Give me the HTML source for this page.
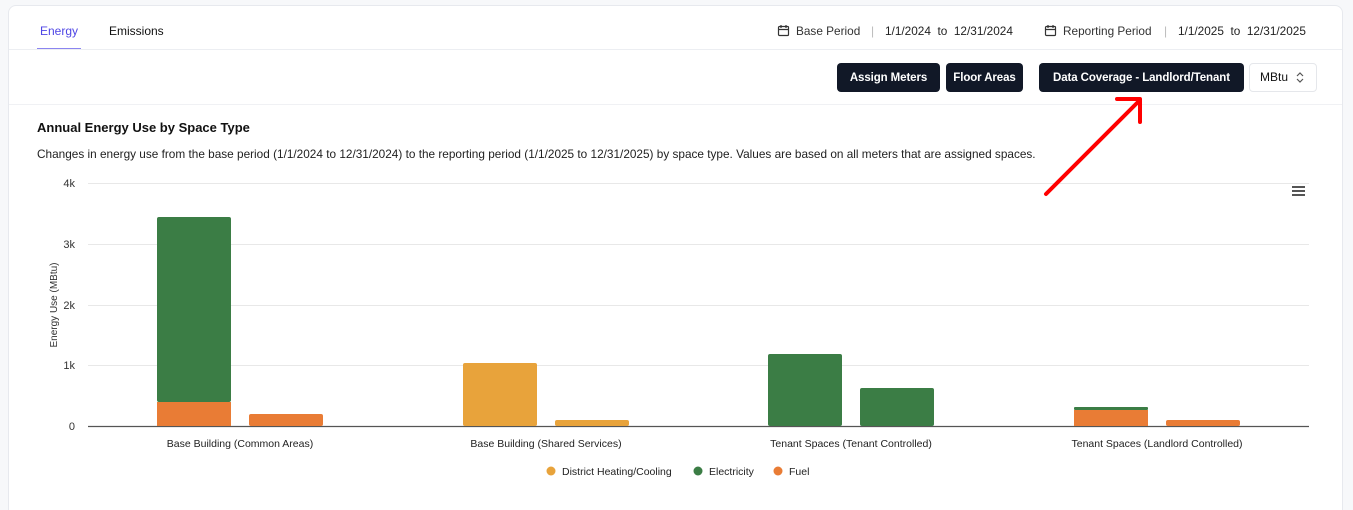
<!DOCTYPE html>
<html style="overflow:hidden;height:510px"><head><meta charset="utf-8"><style>
*{margin:0;padding:0;box-sizing:border-box}
body{width:1353px;height:510px;background:#f7f8fa;font-family:"Liberation Sans",sans-serif;color:#111;overflow:hidden;position:relative}
.card{position:absolute;left:8px;top:5px;width:1335px;height:520px;background:#fff;border:1px solid #e7e9ee;border-radius:8px}
.abs{position:absolute;white-space:nowrap}
.btn{position:absolute;top:63px;height:29px;background:#111827;color:#fff;border-radius:4px;font-size:11.5px;font-weight:bold;display:flex;align-items:center;justify-content:center;letter-spacing:-0.1px;padding-top:1px}
</style></head><body>
<div class="card"></div>
<div class="abs" style="left:40px;top:24px;font-size:12px;color:#4f46e5">Energy</div>
<div class="abs" style="left:37px;top:48px;width:44px;height:2px;background:#8b85f0"></div>
<div class="abs" style="left:109px;top:24px;font-size:12px">Emissions</div>
<div class="abs" style="left:9px;top:49px;width:1333px;height:1px;background:#eceef2"></div>
<svg class="abs" style="left:777px;top:24px" width="13" height="13" viewBox="0 0 13 13" fill="none" stroke="#333" stroke-width="1.2"><rect x="1.5" y="2.5" width="10" height="9" rx="1"/><path d="M1.5 5.5h10M4 1v3M9 1v3"/></svg>
<div class="abs" style="left:796px;top:24px;font-size:11.8px;color:#333">Base Period</div>
<div class="abs" style="left:871px;top:24px;font-size:12px;color:#bbb">|</div>
<div class="abs" style="left:885px;top:24px;font-size:11.8px;color:#222">1/1/2024&nbsp; to&nbsp; 12/31/2024</div>
<svg class="abs" style="left:1044px;top:24px" width="13" height="13" viewBox="0 0 13 13" fill="none" stroke="#333" stroke-width="1.2"><rect x="1.5" y="2.5" width="10" height="9" rx="1"/><path d="M1.5 5.5h10M4 1v3M9 1v3"/></svg>
<div class="abs" style="left:1063px;top:24px;font-size:11.8px;color:#333">Reporting Period</div>
<div class="abs" style="left:1164px;top:24px;font-size:12px;color:#bbb">|</div>
<div class="abs" style="left:1178px;top:24px;font-size:11.8px;color:#222">1/1/2025&nbsp; to&nbsp; 12/31/2025</div>
<div class="btn" style="left:837px;width:103px">Assign Meters</div>
<div class="btn" style="left:946px;width:77px">Floor Areas</div>
<div class="btn" style="left:1039px;width:205px">Data Coverage - Landlord/Tenant</div>
<div class="abs" style="left:1249px;top:63px;width:68px;height:29px;border:1px solid #e5e7eb;border-radius:4px;font-size:12px;line-height:27px;padding-left:10px">MBtu</div>
<svg class="abs" style="left:1295px;top:71px" width="10" height="13" viewBox="0 0 10 13" fill="none" stroke="#555" stroke-width="1.2"><path d="M2 5l3-3 3 3M2 8l3 3 3-3"/></svg>
<div class="abs" style="left:9px;top:104px;width:1333px;height:1px;background:#f0f1f4"></div>
<div class="abs" style="left:37px;top:120px;font-size:13px;font-weight:bold">Annual Energy Use by Space Type</div>
<div class="abs" style="left:37px;top:147px;font-size:11.8px;color:#222">Changes in energy use from the base period (1/1/2024 to 12/31/2024) to the reporting period (1/1/2025 to 12/31/2025) by space type. Values are based on all meters that are assigned spaces.</div>
<svg class="abs" style="left:0;top:0" width="1353" height="510" font-family="Liberation Sans, sans-serif">
<g stroke="#e8e8e8" stroke-width="1"><path d="M88 183.5H1309M88 244.5H1309M88 305.5H1309M88 365.5H1309"/></g>
<path d="M88 426.5H1309" stroke="#555" stroke-width="1.2"/>
<g font-size="11" fill="#333" text-anchor="end"><text x="75" y="187">4k</text><text x="75" y="248">3k</text><text x="75" y="309">2k</text><text x="75" y="369">1k</text><text x="75" y="430">0</text></g>
<text transform="translate(57 305) rotate(-90)" font-size="10" fill="#333" text-anchor="middle">Energy Use (MBtu)</text>
<g>
<rect x="157" y="217" width="74" height="185" fill="#3b7d45" rx="2"/>
<rect x="157" y="402" width="74" height="24" fill="#e97c35"/>
<rect x="249" y="414" width="74" height="12" fill="#e97c35" rx="2"/>
<rect x="463" y="363" width="74" height="63" fill="#e8a33b" rx="2"/>
<rect x="555" y="420" width="74" height="6" fill="#e8a33b" rx="2"/>
<rect x="768" y="354" width="74" height="72" fill="#3b7d45" rx="2"/>
<rect x="860" y="388" width="74" height="38" fill="#3b7d45" rx="2"/>
<rect x="1074" y="407" width="74" height="3" fill="#3b7d45" rx="1"/>
<rect x="1074" y="410" width="74" height="16" fill="#e97c35"/>
<rect x="1166" y="420" width="74" height="6" fill="#e97c35" rx="2"/>
</g>
<g font-size="10.5" fill="#222" text-anchor="middle"><text x="240" y="447">Base Building (Common Areas)</text><text x="546" y="447">Base Building (Shared Services)</text><text x="851" y="447">Tenant Spaces (Tenant Controlled)</text><text x="1157" y="447">Tenant Spaces (Landlord Controlled)</text></g>
<g font-size="10.5" fill="#222"><circle cx="551" cy="471" r="4.5" fill="#e8a33b"/><text x="562" y="475">District Heating/Cooling</text>
<circle cx="698" cy="471" r="4.5" fill="#3b7d45"/><text x="709" y="475">Electricity</text>
<circle cx="778" cy="471" r="4.5" fill="#e97c35"/><text x="789" y="475">Fuel</text></g>
<path d="M1292 187h13M1292 191h13M1292 195h13" stroke="#555" stroke-width="2"/>
<g stroke="#ff0000" stroke-width="4" stroke-linecap="round" stroke-linejoin="round" fill="none"><path d="M1046 194L1139 101"/><path d="M1117 99H1140V122"/></g>
</svg>
</body></html>
